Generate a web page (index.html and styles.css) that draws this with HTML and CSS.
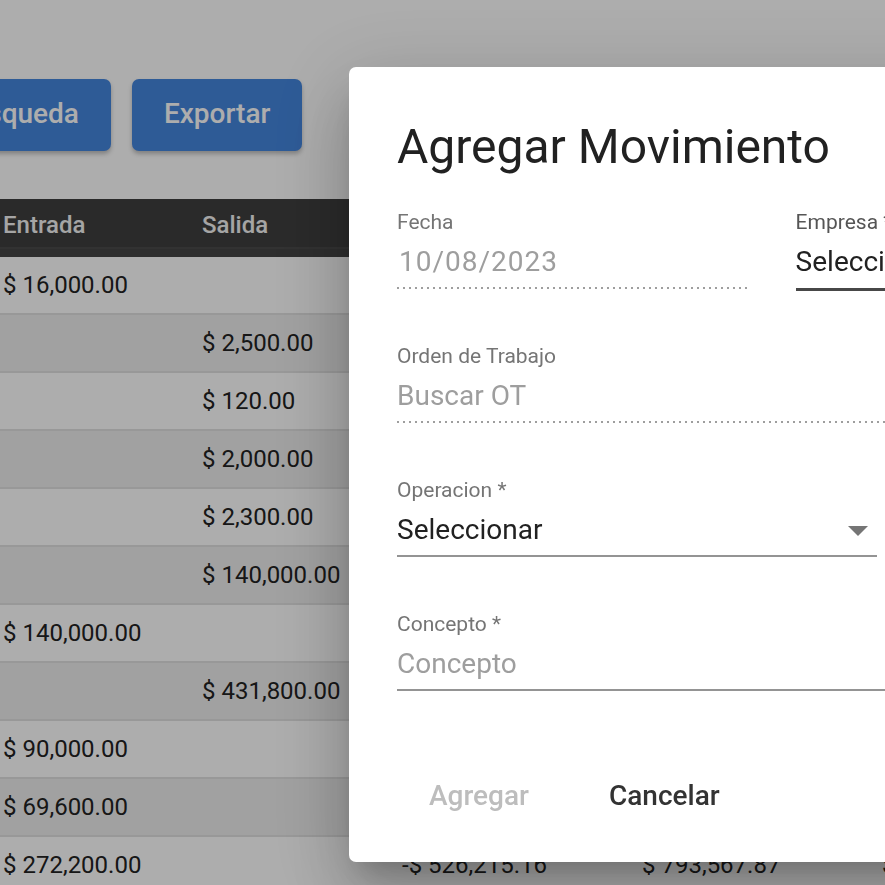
FILE: index.html
```html
<!DOCTYPE html>
<html lang="es">
<head>
    <meta charset="UTF-8">
    <meta name="viewport" content="width=device-width, initial-scale=1.0">
    <title>Movimientos</title>
    <link rel="stylesheet" href="styles.css">
</head>
<body>
    <div class="page">
        <div class="toolbar">
            <button class="btn">Búsqueda</button>
            <button class="btn">Exportar</button>
        </div>

        <table class="movs">
            <colgroup>
                <col class="c-in">
                <col class="c-out">
                <col class="c-bal">
                <col class="c-acc">
                <col class="c-tot">
            </colgroup>
            <thead>
                <tr><th>Entrada</th><th>Salida</th><th>Saldo</th><th>Acumulado</th><th>Total</th></tr>
            </thead>
            <tbody>
                <tr><td>$ 16,000.00</td><td></td><td>$ 16,000.00</td><td>$ 1,319,783.03</td><td>$ 0.00</td></tr>
                <tr><td></td><td>$ 2,500.00</td><td>$ 13,500.00</td><td>$ 1,317,283.03</td><td>$ 0.00</td></tr>
                <tr><td></td><td>$ 120.00</td><td>$ 13,380.00</td><td>$ 1,317,163.03</td><td>$ 0.00</td></tr>
                <tr><td></td><td>$ 2,000.00</td><td>$ 11,380.00</td><td>$ 1,315,163.03</td><td>$ 0.00</td></tr>
                <tr><td></td><td>$ 2,300.00</td><td>$ 9,080.00</td><td>$ 1,312,863.03</td><td>$ 0.00</td></tr>
                <tr><td></td><td>$ 140,000.00</td><td>-$ 130,920.00</td><td>$ 1,172,863.03</td><td>$ 0.00</td></tr>
                <tr><td>$ 140,000.00</td><td></td><td>$ 9,080.00</td><td>$ 1,312,863.03</td><td>$ 0.00</td></tr>
                <tr><td></td><td>$ 431,800.00</td><td>-$ 422,720.00</td><td>$ 881,063.03</td><td>$ 0.00</td></tr>
                <tr><td>$ 90,000.00</td><td></td><td>-$ 332,720.00</td><td>$ 971,063.03</td><td>$ 0.00</td></tr>
                <tr><td>$ 69,600.00</td><td></td><td>-$ 263,120.00</td><td>$ 1,040,663.03</td><td>$ 0.00</td></tr>
                <tr><td>$ 272,200.00</td><td></td><td>-$ 526,215.16</td><td>$ 793,567.87</td><td>$ 0.00</td></tr>
            </tbody>
        </table>
    </div>

    <div class="backdrop">
        <div class="dialog">
            <h1 class="dialog-title">Agregar Movimiento</h1>

            <div class="fields">
                <div class="field-row">
                    <div class="field field-date disabled">
                        <label>Fecha</label>
                        <div class="value">10/08/2023</div>
                    </div>
                    <div class="field field-company focused">
                        <label>Empresa *</label>
                        <div class="value filled">Seleccionar</div>
                    </div>
                </div>

                <div class="field disabled">
                    <label>Orden de Trabajo</label>
                    <div class="value">Buscar OT</div>
                </div>

                <div class="field field-select">
                    <label>Operacion *</label>
                    <div class="value filled">Seleccionar<span class="arrow"></span></div>
                </div>

                <div class="field">
                    <label>Concepto *</label>
                    <div class="value">Concepto</div>
                </div>
            </div>

            <div class="actions">
                <button class="text-btn" disabled>Agregar</button>
                <button class="text-btn">Cancelar</button>
            </div>
        </div>
    </div>
</body>
</html>
```

FILE: styles.css
```css
/* Estilos generales */
html, body {
    margin: 0;
    padding: 0;
    overflow: hidden;
}

body {
    font-family: 'Roboto', 'Liberation Sans', sans-serif;
    background-color: #fff;
    color: #222;
    width: 885px;
    height: 885px;
}

/* Barra de botones */
.toolbar {
    display: flex;
    gap: 21px;
    margin: 79px 0 48px -78px;
}

.btn {
    height: 72px;
    padding: 0 32px 3px;
    border: none;
    border-radius: 7px;
    background-color: #4486de;
    color: #fff;
    font-family: inherit;
    font-size: 28px;
    font-weight: 500;
    box-shadow: 0 3px 4px rgba(0, 0, 0, 0.25);
}

/* Tabla */
.movs {
    border-collapse: collapse;
    table-layout: fixed;
    width: 1080px;
    font-size: 24px;
}

.c-in { width: 199px; }
.c-out { width: 200px; }
.c-bal { width: 240px; }
.c-acc { width: 240px; }
.c-tot { width: 201px; }

.movs th {
    height: 58px;
    padding: 0 3px 7px;
    box-sizing: border-box;
    text-align: left;
    font-weight: 500;
    color: #f3f3f3;
    background: linear-gradient(#3f3f3f 48px, #4a4a4a 48px 50px, #444 50px);
}

.movs td {
    height: 56px;
    padding: 0 3px;
    white-space: nowrap;
    border-bottom: 2px solid #e1e1e1;
}

.movs tbody tr:nth-child(even) td {
    background-color: #eee;
}

/* Modal */
.backdrop {
    position: fixed;
    inset: 0;
    background-color: rgba(0, 0, 0, 0.32);
    padding: 67px 0 0 349px;
}

.dialog {
    width: 640px;
    height: 795px;
    box-sizing: border-box;
    padding: 52px 48px 0;
    background-color: #fff;
    border-radius: 7px;
    box-shadow: 0 19px 26px -12px rgba(0, 0, 0, 0.2),
                0 42px 66px 5px rgba(0, 0, 0, 0.14),
                0 16px 80px 14px rgba(0, 0, 0, 0.12);
}

.dialog-title {
    margin: 0 0 35px;
    font-size: 48px;
    line-height: 56px;
    font-weight: 400;
    color: #212121;
}

.fields {
    display: flex;
    flex-direction: column;
    gap: 55px;
}

.field-row {
    display: flex;
    gap: 45px;
}

.field-date {
    width: 357px;
}

.field-company {
    flex: 1;
}

.field-select {
    width: 480px;
}

.field label {
    display: block;
    font-size: 21px;
    line-height: 24px;
    color: #757575;
}

.field .value {
    position: relative;
    margin-top: 10px;
    padding-bottom: 7px;
    font-size: 28px;
    line-height: 36px;
    color: #9e9e9e;
    border-bottom: 2px solid #949494;
    white-space: nowrap;
}

.field .value.filled {
    color: #212121;
}

.field.disabled .value {
    border-bottom: none;
    padding-bottom: 9px;
    background: linear-gradient(to right, #9e9e9e 2px, transparent 2px) bottom left / 6px 2px repeat-x;
}

.field-date .value {
    letter-spacing: 1px;
    text-indent: 2px;
}

.field.focused label {
    color: #555;
}

.field.focused .value {
    padding-bottom: 8px;
    margin-bottom: -2px;
    border-bottom: 3px solid #474747;
}

.arrow {
    position: absolute;
    right: 9px;
    top: 14px;
    border-left: 10px solid transparent;
    border-right: 10px solid transparent;
    border-top: 10px solid #757575;
}

/* Botones del modal */
.actions {
    display: flex;
    gap: 16px;
    margin-top: 68px;
}

.text-btn {
    height: 72px;
    padding: 0 32px;
    border: none;
    background: none;
    font-family: inherit;
    font-size: 28px;
    font-weight: 500;
    color: #333;
}

.text-btn:disabled {
    color: #bdbdbd;
}
```
